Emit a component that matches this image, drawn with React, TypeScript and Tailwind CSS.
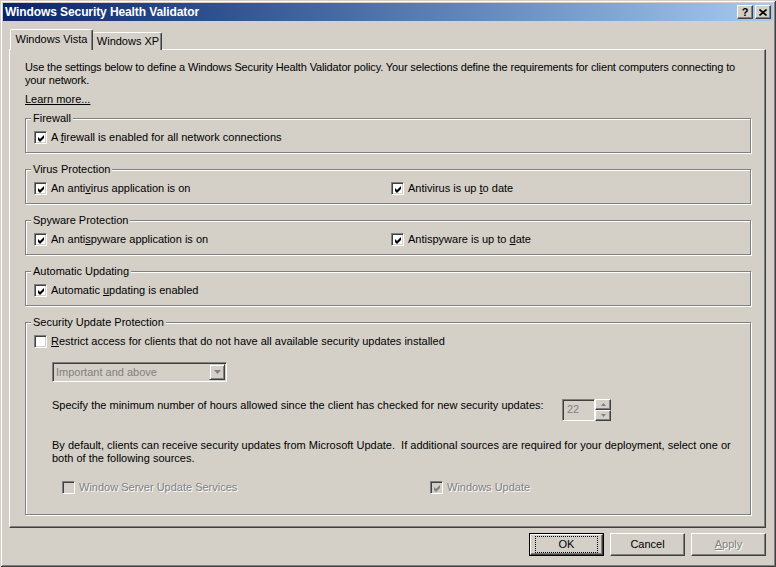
import React from "react";

const FONT = "font-['Tahoma','Liberation_Sans',sans-serif]";

function Check({ checked, disabled, className = "" }: { checked?: boolean; disabled?: boolean; className?: string }) {
  return (
    <span
      className={`inline-flex w-[13px] h-[13px] shrink-0 items-center justify-center border border-t-[#808080] border-l-[#808080] border-b-white border-r-white shadow-[inset_1px_1px_0_#404040,inset_-1px_-1px_0_#d4d0c8] ${
        disabled ? "bg-[#d4d0c8]" : "bg-white"
      } ${className}`}
    >
      {checked && (
        <svg width="9" height="9" viewBox="0 0 9 9" className="mt-px ml-px">
          <polygon
            points="1,3 3,5 7,1 7,4 3,8 1,6"
            fill={disabled ? "#808080" : "#000"}
          />
        </svg>
      )}
    </span>
  );
}

function Row({
  checked,
  disabled,
  children,
}: {
  checked?: boolean;
  disabled?: boolean;
  children: React.ReactNode;
}) {
  return (
    <div className="flex items-center gap-[4px] h-[13px]">
      <Check checked={checked} disabled={disabled} />
      <span
        className={`leading-[13px] whitespace-nowrap ${
          disabled ? "text-[#808080] [text-shadow:1px_1px_0_#fff]" : ""
        }`}
      >
        {children}
      </span>
    </div>
  );
}

function Group({
  label,
  className = "",
  children,
}: {
  label: string;
  className?: string;
  children: React.ReactNode;
}) {
  return (
    <div
      className={`relative w-[726px] border border-[#808080] shadow-[inset_1px_1px_0_#fff,1px_1px_0_#fff] pl-[8px] ${className}`}
    >
      <span className="absolute left-[5px] -top-[7px] px-[2px] bg-[#d4d0c8] leading-[13px]">
        {label}
      </span>
      {children}
    </div>
  );
}

function Btn({
  children,
  isDefault,
  disabled,
}: {
  children: React.ReactNode;
  isDefault?: boolean;
  disabled?: boolean;
}) {
  return (
    <div
      className={`w-[75px] h-[23px] ${isDefault ? "border border-black" : ""}`}
    >
      <div className="h-full w-full flex items-center justify-center border border-t-white border-l-white border-r-[#404040] border-b-[#404040] shadow-[inset_-1px_-1px_0_#808080]">
        {isDefault ? (
          <span className="leading-[13px] outline outline-1 outline-dotted outline-black w-[61px] h-[15px] flex items-center justify-center">
            {children}
          </span>
        ) : (
          <span
            className={`leading-[13px] ${
              disabled ? "text-[#808080] [text-shadow:1px_1px_0_#fff]" : ""
            }`}
          >
            {children}
          </span>
        )}
      </div>
    </div>
  );
}

export default function App() {
  return (
    <div
      className={`w-[776px] h-[567px] bg-[#d4d0c8] p-[3px] shadow-[inset_1px_1px_0_#d4d0c8,inset_-1px_-1px_0_#404040,inset_2px_2px_0_#fff,inset_-2px_-2px_0_#808080] text-[11px] text-black ${FONT} overflow-hidden`}
    >
      {/* Title bar */}
      <div className="h-[18px] flex items-center justify-between bg-gradient-to-r from-[#0a246a] to-[#a6caf0] pl-[2px] pr-[2px]">
        <span className="text-white font-bold text-[12px] leading-[14px] whitespace-nowrap tracking-[-0.1px]">
          Windows Security Health Validator
        </span>
        <div className="flex gap-[2px]">
          {["?", "x"].map((g) => (
            <div
              key={g}
              className="w-[16px] h-[14px] bg-[#d4d0c8] border border-t-white border-l-white border-r-[#404040] border-b-[#404040] shadow-[inset_-1px_-1px_0_#808080] flex items-center justify-center font-bold text-[11px] leading-none"
            >
              {g === "?" ? "?" : (
                <svg width="8" height="7" viewBox="0 0 8 7">
                  <path d="M0.5 0.5 L7.5 6.5 M7.5 0.5 L0.5 6.5" stroke="#000" strokeWidth="1.6" />
                </svg>
              )}
            </div>
          ))}
        </div>
      </div>

      {/* Tab control */}
      <div className="mt-[8px] ml-[6px] w-[757px]">
        <div className="flex items-end h-[21px] pl-[1px]">
          <div className="relative z-10 h-[21px] w-[83px] bg-[#d4d0c8] border-t border-l border-t-white border-l-white border-r border-r-[#404040] shadow-[inset_-1px_0_0_#808080] rounded-t-[2px] flex items-start justify-center pt-[3px] leading-[13px]">
            Windows Vista
          </div>
          <div className="h-[18px] w-[69px] bg-[#d4d0c8] border-t border-t-white border-r border-r-[#404040] shadow-[inset_-1px_0_0_#808080] rounded-t-[2px] flex items-start justify-center pt-[2px] pl-[2px] leading-[13px]">
            Windows XP
          </div>
        </div>
        <div className="-mt-px h-[479px] border border-t-white border-l-white border-r-[#404040] border-b-[#404040] shadow-[inset_-1px_-1px_0_#808080] pl-[15px] pt-[11px]">
          <p className="leading-[13px] w-[716px] tracking-[-0.15px]">
            Use the settings below to define a Windows Security Health Validator policy. Your selections define the requirements for client computers connecting to your network.
          </p>
          <div className="mt-[6px] leading-[13px] underline">Learn more...</div>

          <div className="mt-[12px] flex flex-col gap-[16px]">
            <Group label="Firewall" className="h-[35px] pt-[12px]">
              <Row checked>
                A <u>f</u>irewall is enabled for all network connections
              </Row>
            </Group>

            <Group label="Virus Protection" className="h-[35px] pt-[12px]">
              <div className="grid grid-cols-[357px_1fr]">
                <Row checked>
                  An anti<u>v</u>irus application is on
                </Row>
                <Row checked>
                  Antivirus is up <u>t</u>o date
                </Row>
              </div>
            </Group>

            <Group label="Spyware Protection" className="h-[35px] pt-[12px]">
              <div className="grid grid-cols-[357px_1fr]">
                <Row checked>
                  An anti<u>s</u>pyware application is on
                </Row>
                <Row checked>
                  Antispyware is up to <u>d</u>ate
                </Row>
              </div>
            </Group>

            <Group label="Automatic Updating" className="h-[35px] pt-[12px]">
              <Row checked>
                Automatic <u>u</u>pdating is enabled
              </Row>
            </Group>

            <Group label="Security Update Protection" className="h-[193px] pt-[12px]">
              <Row>
                <u>R</u>estrict access for clients that do not have all available security updates installed
              </Row>

              {/* Combo */}
              <div className="mt-[14px] ml-[18px] w-[175px] h-[20px] flex border border-t-[#808080] border-l-[#808080] border-b-white border-r-white shadow-[inset_1px_1px_0_#404040,inset_-1px_-1px_0_#d4d0c8] bg-[#d4d0c8] p-[1px]">
                <span className="flex-1 pl-[2px] leading-[16px] text-[#808080]">Important and above</span>
                <div className="w-[16px] h-full border border-t-[#d4d0c8] border-l-[#d4d0c8] border-r-[#404040] border-b-[#404040] shadow-[inset_1px_1px_0_#fff,inset_-1px_-1px_0_#808080] flex items-center justify-center">
                  <svg width="7" height="4" viewBox="0 0 7 4">
                    <path d="M0 0 H7 L3.5 4 Z" fill="#808080" />
                  </svg>
                </div>
              </div>

              {/* Hours */}
              <div className="mt-[17px] ml-[18px] flex items-start h-[22px]">
                <span className="w-[510px] leading-[13px] whitespace-nowrap">
                  Specify the minimum number of hours allowed since the client has checked for new security updates:
                </span>
                <div className="w-[33px] h-[22px] border border-t-[#808080] border-l-[#808080] border-b-white border-r-white shadow-[inset_1px_1px_0_#404040] bg-[#d4d0c8] pl-[4px] leading-[19px] text-[#808080]">
                  22
                </div>
                <div className="flex flex-col h-[22px] w-[16px]">
                  {[0, 1].map((i) => (
                    <div
                      key={i}
                      className="flex-1 border border-t-white border-l-white border-r-[#404040] border-b-[#404040] shadow-[inset_-1px_-1px_0_#808080] flex items-center justify-center"
                    >
                      <svg width="5" height="3" viewBox="0 0 5 3">
                        <path d={i === 0 ? "M0 3 H5 L2.5 0 Z" : "M0 0 H5 L2.5 3 Z"} fill="#808080" />
                      </svg>
                    </div>
                  ))}
                </div>
              </div>

              <p className="mt-[18px] ml-[18px] w-[680px] leading-[13px]">
                By default, clients can receive security updates from Microsoft Update.&nbsp; If additional sources are required for your deployment, select one or both of the following sources.
              </p>

              <div className="mt-[16px] ml-[28px] grid grid-cols-[368px_1fr]">
                <Row disabled>Window Server Update Services</Row>
                <Row checked disabled>
                  Windows Update
                </Row>
              </div>
            </Group>
          </div>
        </div>
      </div>

      {/* Buttons */}
      <div className="mt-[5px] ml-[6px] w-[757px] flex justify-end gap-[6px]">
        <Btn isDefault>OK</Btn>
        <Btn>Cancel</Btn>
        <Btn disabled>
          <u>A</u>pply
        </Btn>
      </div>
    </div>
  );
}
